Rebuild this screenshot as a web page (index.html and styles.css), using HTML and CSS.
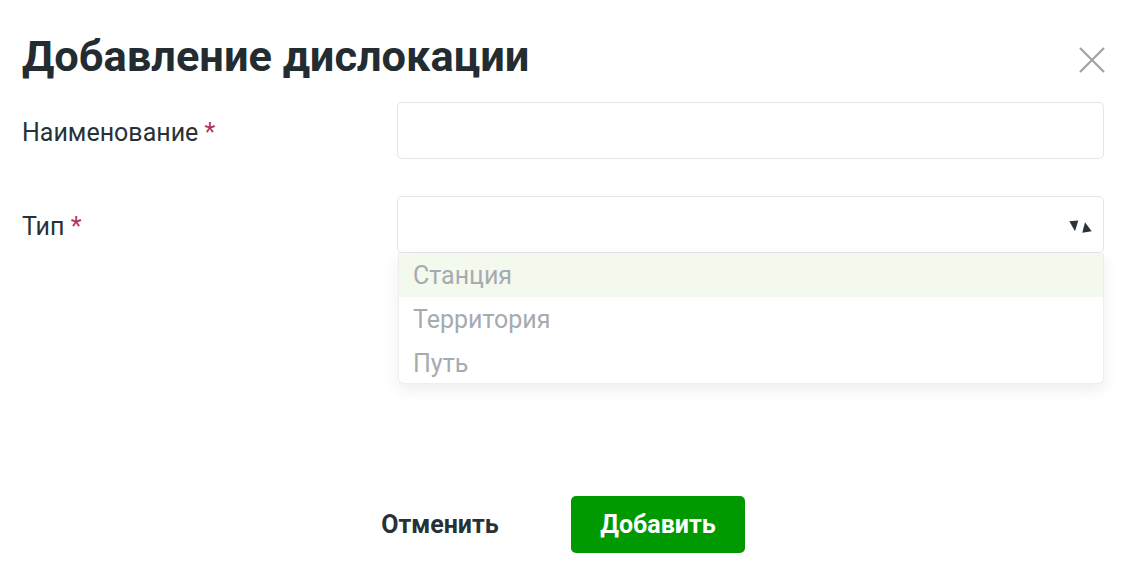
FILE: index.html
```html
<!DOCTYPE html>
<html lang="ru">
<head>
<meta charset="utf-8">
<title>Добавление дислокации</title>
<link rel="stylesheet" href="styles.css">
</head>
<body>
<div class="dialog">
  <div class="header">
    <h1 class="title">Добавление дислокации</h1>
    <button class="close" aria-label="Закрыть">
      <svg width="26" height="26" viewBox="0 0 26 26"><path d="M1 1 L25 25 M25 1 L1 25" stroke="#a2a2a2" stroke-width="2.2" fill="none"/></svg>
    </button>
  </div>
  <div class="form">
    <div class="label">Наименование <span class="req">*</span></div>
    <div class="field"><div class="input"></div></div>
    <div class="label">Тип <span class="req">*</span></div>
    <div class="field">
      <div class="input select">
        <svg class="sort" width="26" height="16" viewBox="0 0 26 16"><path d="M3.3 4.2 L12.3 3.5 L9 14.2 Z" fill="#2a333a"/><path d="M16.3 15.8 L19 5.2 L25.7 14.2 Z" fill="#2a333a"/></svg>
      </div>
      <ul class="dropdown">
        <li class="option active">Станция</li>
        <li class="option">Территория</li>
        <li class="option">Путь</li>
      </ul>
    </div>
  </div>
  <div class="footer">
    <button class="btn btn-cancel">Отменить</button>
    <button class="btn btn-primary">Добавить</button>
  </div>
</div>
</body>
</html>
```
FILE: styles.css
```css
* { box-sizing: border-box; }
html, body { margin: 0; padding: 0; background: #fff; }
body { font-family: Roboto, "Noto Sans", sans-serif; color: #263238; }

.dialog { padding: 31px 30px 0 22px; width: 1134px; }

.header { display: flex; justify-content: space-between; align-items: flex-start; height: 71px; }
.title { margin: 0; font-size: 43.4px; line-height: 52px; font-weight: 700; color: #222c31; white-space: nowrap; }
.close { border: 0; background: none; padding: 0; margin: 16px -1px 0 0; width: 26px; height: 26px; cursor: pointer; }
.close svg { display: block; }

.form { display: grid; grid-template-columns: 375px 1fr; row-gap: 37px; }
.label { font-size: 25px; line-height: 30px; padding-top: 16px; color: #263238; }
.req { color: #b5325f; }
.field { position: relative; }
.input { height: 57px; border: 1px solid #e3e5e6; border-radius: 5px; background: #fff; }
.select { display: flex; align-items: center; justify-content: flex-end; padding-right: 11px; }
.sort { display: block; }

.dropdown {
  position: absolute; left: 1px; right: 0; top: 57px; margin: 0; padding: 0; list-style: none;
  background: #fff; border: 1px solid #eceeef; border-top: 0; border-radius: 0 0 6px 6px;
  box-shadow: 0 6px 16px rgba(0, 0, 0, 0.07);
}
.option { font-size: 25px; line-height: 30px; padding: 8px 14px 6px; color: #a5abb0; }
.option:last-child { padding-bottom: 4px; }
.option.active { background: #f3f9ec; }

.footer { display: flex; justify-content: center; gap: 44px; margin-top: 243px; padding-right: 28px; }
.btn { font-family: inherit; font-size: 25px; font-weight: 700; height: 57px; width: 174px; border: 0; border-radius: 5px; cursor: pointer; }
.btn-cancel { background: none; color: #263238; }
.btn-primary { background: #009a00; color: #fff; }
```
